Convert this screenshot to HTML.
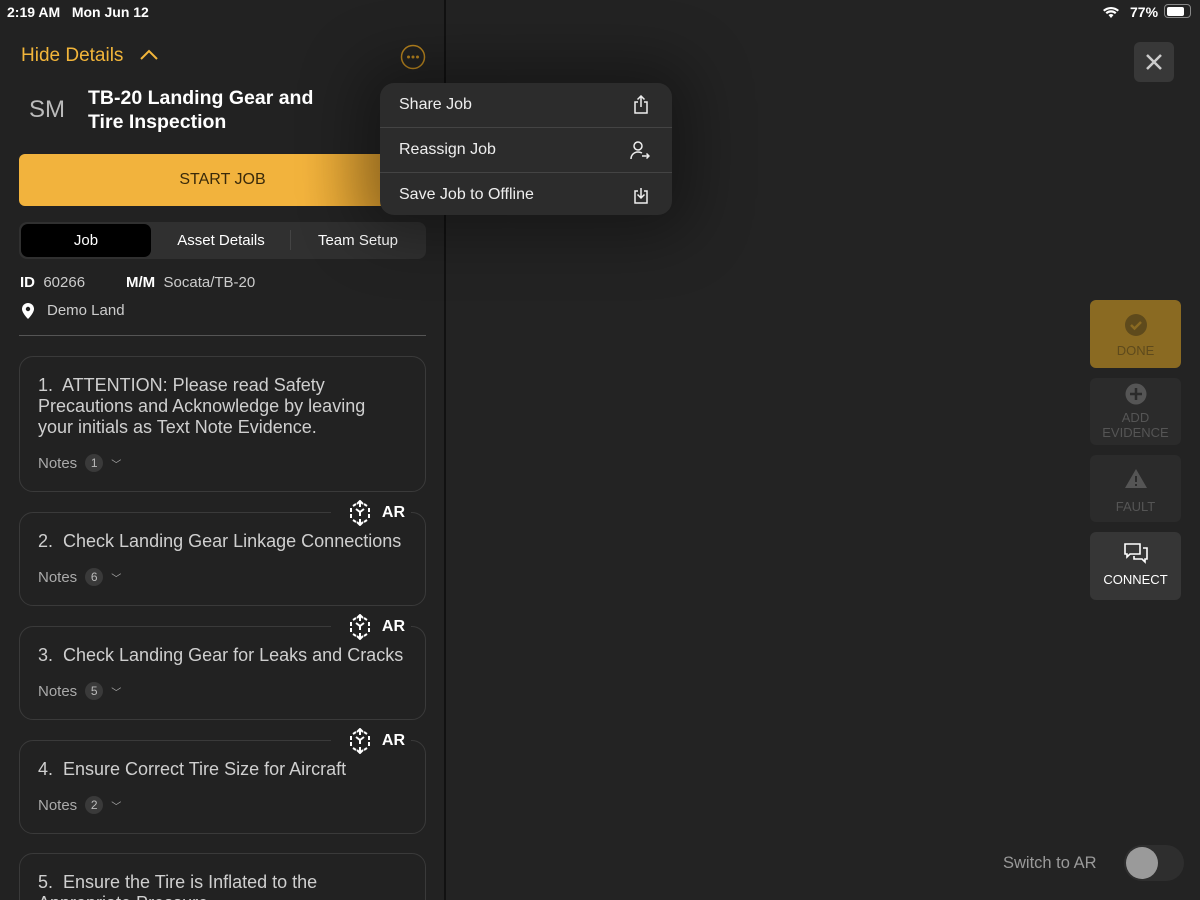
<!DOCTYPE html>
<html style="width:1200px;height:900px;overflow:hidden"><head><meta charset="utf-8"><style>
*{margin:0;padding:0;box-sizing:border-box}
body{width:1200px;height:900px;overflow:hidden;background:#232323;font-family:"Liberation Sans",sans-serif;color:#fff;position:relative}
.abs{position:absolute}
.left{left:0;top:0;width:446px;height:900px;background:#222;border-right:2px solid #111;overflow:hidden}
.card{position:absolute;left:19px;width:407px;border:1px solid #3a3a3a;border-radius:14px;background:#222}
.card .t{position:absolute;left:18px;font-size:18px;color:#cfcfcf;line-height:21px}
.notes{position:absolute;left:18px;font-size:15px;color:#aaa;display:flex;align-items:center}
.badge{display:inline-block;width:18px;height:18px;border-radius:9px;background:#3a3a3a;font-size:12px;text-align:center;line-height:18px;margin-left:8px;color:#bbb}
.ar{position:absolute;left:311px;width:80px;height:24px;background:#222;display:flex;align-items:center;justify-content:flex-end;font-weight:bold;font-size:16px;gap:10px;padding-right:6px}
.side{position:absolute;left:1090px;width:91px;border-radius:6px;text-align:center;font-size:13px}
.row{height:44px;display:flex;align-items:center;justify-content:space-between;padding:0 22px 0 19px;font-size:16px;color:#eee}
</style></head><body>
<div class="abs left">
<div class="abs" style="left:7px;top:4px;font-size:14px;font-weight:bold">2:19 AM&nbsp;&nbsp;&nbsp;Mon Jun 12</div>
<div class="abs" style="left:21px;top:45px;font-size:19px;color:#f2b53a">Hide Details</div>
<svg class="abs" style="left:139px;top:48px" width="20" height="14"><path d="M2 11 L10 3 L18 11" stroke="#f2b53a" stroke-width="2" fill="none"/></svg>
<svg class="abs" style="left:400px;top:44px" width="26" height="26"><circle cx="13" cy="13" r="11.5" stroke="#b8841e" stroke-width="1.5" fill="none"/><circle cx="8.5" cy="13" r="1.5" fill="#b8841e"/><circle cx="13" cy="13" r="1.5" fill="#b8841e"/><circle cx="17.5" cy="13" r="1.5" fill="#b8841e"/></svg>
<div class="abs" style="left:29px;top:96px;font-size:24px;color:#bbb">SM</div>
<div class="abs" style="left:88px;top:86px;font-size:19.5px;font-weight:bold;line-height:24px">TB-20 Landing Gear and<br>Tire Inspection</div>
<div class="abs" style="left:19px;top:154px;width:407px;height:52px;border-radius:6px;background:linear-gradient(90deg,#f2b33d 70%,#c98d26);color:#3a2a0a;font-size:16px;text-align:center;line-height:52px">START JOB</div>
<div class="abs" style="left:19px;top:222px;width:407px;height:37px;border-radius:8px;background:#303030"></div>
<div class="abs" style="left:21px;top:224px;width:130px;height:33px;border-radius:7px;background:#000;text-align:center;line-height:33px;font-size:15px">Job</div>
<div class="abs" style="left:152px;top:224px;width:138px;height:33px;text-align:center;line-height:33px;font-size:15px">Asset Details</div>
<div class="abs" style="left:290px;top:230px;width:1px;height:20px;background:#444"></div>
<div class="abs" style="left:291px;top:224px;width:134px;height:33px;text-align:center;line-height:33px;font-size:15px">Team Setup</div>
<div class="abs" style="left:20px;top:274px;font-size:15px;color:#ccc"><b style="color:#fff">ID</b>&nbsp;&nbsp;60266</div>
<div class="abs" style="left:126px;top:274px;font-size:15px;color:#ccc"><b style="color:#fff">M/M</b>&nbsp;&nbsp;Socata/TB-20</div>
<svg class="abs" style="left:21px;top:302px" width="14" height="18"><path d="M7 1a6 6 0 0 0-6 6c0 4 6 10 6 10s6-6 6-10a6 6 0 0 0-6-6z" fill="#fff"/><circle cx="7" cy="7" r="2.2" fill="#222"/></svg>
<div class="abs" style="left:47px;top:302px;font-size:15px;color:#ccc">Demo Land</div>
<div class="abs" style="left:19px;top:335px;width:407px;height:1px;background:#555"></div>

<div class="card" style="top:356px;height:136px"><div class="t" style="top:18px">1.&nbsp; ATTENTION: Please read Safety<br>Precautions and Acknowledge by leaving<br>your initials as Text Note Evidence.</div><div class="notes" style="top:97px">Notes<span class="badge">1</span><span style="margin-left:8px;font-size:10px">﹀</span></div></div>
<div class="card" style="top:512px;height:94px"><div class="ar" style="top:-12px"><svg width="24" height="26"><g stroke="#fff" stroke-width="2" fill="none"><path d="M12 2v5M9 4l3-3 3 3M12 24v-5M9 22l3 3 3-3M3 8v4M3 14v4M21 8v4M21 14v4M5 6l3-2M19 6l-3-2M5 20l3 2M19 20l-3 2M8 9l4 3 4-3M12 12v4"/></g></svg>AR</div><div class="t" style="top:18px">2.&nbsp; Check Landing Gear Linkage Connections</div><div class="notes" style="top:55px">Notes<span class="badge">6</span><span style="margin-left:8px;font-size:10px">﹀</span></div></div>
<div class="card" style="top:626px;height:94px"><div class="ar" style="top:-12px"><svg width="24" height="26"><g stroke="#fff" stroke-width="2" fill="none"><path d="M12 2v5M9 4l3-3 3 3M12 24v-5M9 22l3 3 3-3M3 8v4M3 14v4M21 8v4M21 14v4M5 6l3-2M19 6l-3-2M5 20l3 2M19 20l-3 2M8 9l4 3 4-3M12 12v4"/></g></svg>AR</div><div class="t" style="top:18px">3.&nbsp; Check Landing Gear for Leaks and Cracks</div><div class="notes" style="top:55px">Notes<span class="badge">5</span><span style="margin-left:8px;font-size:10px">﹀</span></div></div>
<div class="card" style="top:740px;height:94px"><div class="ar" style="top:-12px"><svg width="24" height="26"><g stroke="#fff" stroke-width="2" fill="none"><path d="M12 2v5M9 4l3-3 3 3M12 24v-5M9 22l3 3 3-3M3 8v4M3 14v4M21 8v4M21 14v4M5 6l3-2M19 6l-3-2M5 20l3 2M19 20l-3 2M8 9l4 3 4-3M12 12v4"/></g></svg>AR</div><div class="t" style="top:18px">4.&nbsp; Ensure Correct Tire Size for Aircraft</div><div class="notes" style="top:55px">Notes<span class="badge">2</span><span style="margin-left:8px;font-size:10px">﹀</span></div></div>
<div class="card" style="top:853px;height:80px"><div class="t" style="top:18px">5.&nbsp; Ensure the Tire is Inflated to the<br>Appropriate Pressure</div></div>
</div>

<div class="abs" style="left:380px;top:83px;width:292px;height:132px;border-radius:14px;background:#2c2c2c;box-shadow:0 0 60px 20px rgba(0,0,0,.35);overflow:hidden">
<div class="row">Share Job<svg width="18" height="20"><g stroke="#eee" stroke-width="1.5" fill="none"><path d="M6 7H3v11h12V7h-3M9 12V1M5.5 4.5L9 1l3.5 3.5"/></g></svg></div>
<div style="height:1px;background:#444"></div>
<div class="row">Reassign Job<svg width="20" height="20"><g stroke="#eee" stroke-width="1.5" fill="none"><circle cx="8" cy="6" r="4"/><path d="M1 19c0-4 3-7 7-7 2 0 3 .5 4 1M12 16h7M16.5 13.5L19 16l-2.5 2.5"/></g></svg></div>
<div style="height:1px;background:#444"></div>
<div class="row">Save Job to Offline<svg width="18" height="20"><g stroke="#eee" stroke-width="1.5" fill="none"><path d="M6 6H3v12h12V6h-3M9 3v10M5.5 9.5L9 13l3.5-3.5"/></g></svg></div>
</div>

<svg class="abs" style="left:1102px;top:6px" width="18" height="13"><path d="M9 12l-2.5-3a4 4 0 0 1 5 0zM3.5 6.5a8 8 0 0 1 11 0l-1.5 1.5a6 6 0 0 0-8 0zM1 4a12 12 0 0 1 16 0l-1.5 1.5a10 10 0 0 0-13 0z" fill="#fff"/></svg>
<div class="abs" style="left:1130px;top:4px;font-size:14px;font-weight:bold">77%</div>
<div class="abs" style="left:1164px;top:4px;width:27px;height:14px;border:1.5px solid #888;border-radius:4px;padding:1.5px"><div style="width:17px;height:100%;background:#fff;border-radius:2px"></div></div>
<div class="abs" style="left:1134px;top:42px;width:40px;height:40px;border-radius:6px;background:#383838"></div>
<svg class="abs" style="left:1144px;top:52px" width="20" height="20"><path d="M3 3L17 17M17 3L3 17" stroke="#ccc" stroke-width="2.5"/></svg>

<div class="side" style="top:300px;height:68px;background:#8a6a22;color:#5e4a1c"><svg style="margin-top:13px" width="24" height="24"><circle cx="12" cy="12" r="11" fill="#5e4a1c"/><path d="M7 12l3.5 3.5L17 9" stroke="#8a6a22" stroke-width="2.5" fill="none"/></svg><div style="margin-top:3px">DONE</div></div>
<div class="side" style="top:378px;height:67px;background:#2b2b2b;color:#555;line-height:15px"><svg style="margin-top:5px" width="22" height="22"><circle cx="11" cy="11" r="10.5" fill="#555"/><path d="M11 5v12M5 11h12" stroke="#2b2b2b" stroke-width="2.5"/></svg><div style="margin-top:2px">ADD<br>EVIDENCE</div></div>
<div class="side" style="top:455px;height:67px;background:#2b2b2b;color:#555"><svg style="margin-top:13px" width="24" height="22"><path d="M12 1L23 20H1z" fill="#555"/><path d="M12 8v6M12 16v2" stroke="#2b2b2b" stroke-width="2"/></svg><div style="margin-top:6px">FAULT</div></div>
<div class="side" style="top:532px;height:68px;background:#363636;color:#fff"><svg style="margin-top:10px" width="26" height="24"><g stroke="#fff" stroke-width="1.6" fill="none"><path d="M2 2h15v10H7l-3 3v-3H2z"/><path d="M20 6h4v11h-2v3l-3-3h-8v-3"/></g></svg><div style="margin-top:3px">CONNECT</div></div>

<div class="abs" style="left:1003px;top:854px;font-size:16.5px;color:#999">Switch to AR</div>
<div class="abs" style="left:1124px;top:845px;width:60px;height:36px;border-radius:18px;background:#2e2e2e"></div>
<div class="abs" style="left:1126px;top:847px;width:32px;height:32px;border-radius:16px;background:#9a9a9a"></div>
</body></html>
